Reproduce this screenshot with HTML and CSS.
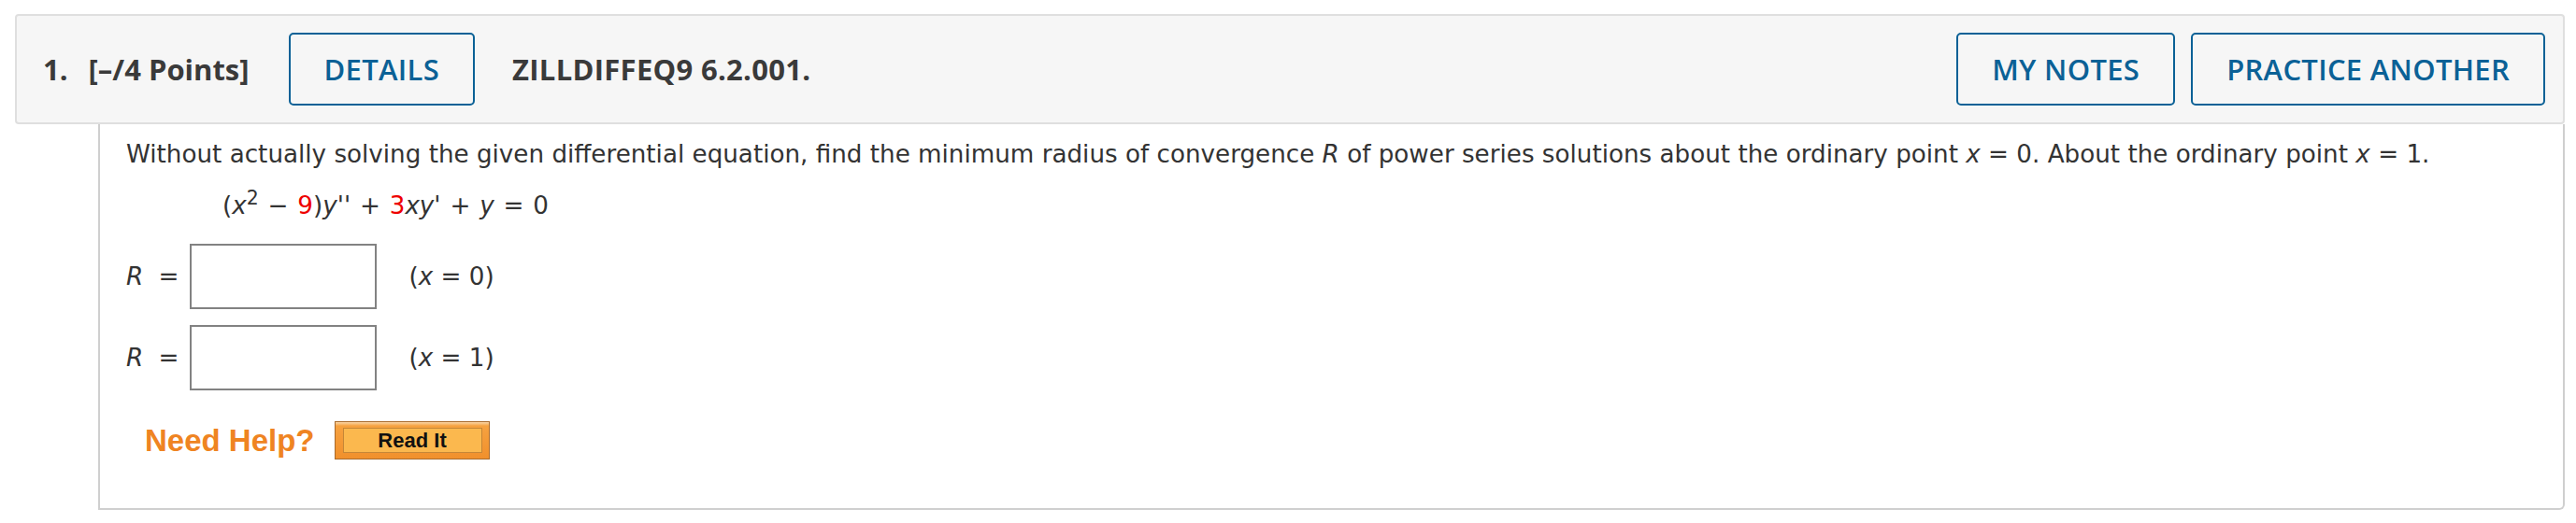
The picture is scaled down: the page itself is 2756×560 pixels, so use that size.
FILE: index.html
```html
<!DOCTYPE html>
<html lang="en">
<head>
<meta charset="utf-8">
<title>ZILLDIFFEQ9 6.2.001</title>
<link rel="stylesheet" href="styles.css">
</head>
<body>
<div class="question">
  <div class="qhead">
    <span class="qnum">1.</span>
    <span class="qpts">[–/4 Points]</span>
    <button class="btn">DETAILS</button>
    <span class="qid">ZILLDIFFEQ9 6.2.001.</span>
    <span class="spacer"></span>
    <button class="btn">MY NOTES</button>
    <button class="btn">PRACTICE ANOTHER</button>
  </div>
  <div class="qbody">
    <p class="prompt">Without actually solving the given differential equation, find the minimum radius of convergence <i>R</i> of power series solutions about the ordinary point <i>x</i> = 0. About the ordinary point <i>x</i> = 1.</p>
    <div class="eq">(<i>x</i><sup>2</sup> − <span class="red">9</span>)<i>y''</i> + <span class="red">3</span><i>xy'</i> + <i>y</i> = 0</div>
    <div class="ans">
      <span class="lbl"><i>R</i>&nbsp;=</span>
      <span class="box"></span>
      <span class="pt">(<i>x</i> = 0)</span>
    </div>
    <div class="ans">
      <span class="lbl"><i>R</i>&nbsp;=</span>
      <span class="box"></span>
      <span class="pt">(<i>x</i> = 1)</span>
    </div>
    <div class="help">
      <span class="needhelp">Need Help?</span>
      <span class="readit"><span class="readit-in">Read It</span></span>
    </div>
  </div>
</div>
</body>
</html>
```
FILE: styles.css
```css
html, body {
  margin: 0;
  padding: 0;
  background: #ffffff;
}

.question {
  padding: 15px 12px 0 16px;
}

.qhead {
  display: flex;
  align-items: center;
  background: #f6f6f6;
  border: 2px solid #dfdfdf;
  border-radius: 4px;
  padding: 18px 19px 18px 28px;
  font-family: "Open Sans", "Liberation Sans", sans-serif;
  color: #3a3a3a;
}

.qnum,
.qpts,
.qid {
  font-size: 31px;
  font-weight: 700;
}

.qnum { margin-right: 22px; }
.qpts { margin-right: 42px; }
.qid { margin-left: 40px; letter-spacing: 0.3px; }

.spacer { flex: 1; }

.btn {
  height: 78px;
  padding: 0 36px;
  background: transparent;
  border: 2px solid #0b6196;
  border-radius: 5px;
  color: #0b6196;
  font-family: "Open Sans", "Liberation Sans", sans-serif;
  font-size: 31px;
  font-weight: 600;
  line-height: 1;
  letter-spacing: 0.3px;
}

.btn + .btn { margin-left: 17px; }

.qbody {
  margin-left: 89px;
  border: 2px solid #cfcfcf;
  border-top: 0;
  border-radius: 0 0 6px 0;
  padding: 16px 0 52px 28px;
  font-family: "DejaVu Sans", Verdana, sans-serif;
  font-size: 26.2px;
  line-height: 32px;
  color: #333333;
}

.prompt { margin: 0; }

.eq {
  margin: 23px 0 0 103px;
  word-spacing: 1.5px;
}

.eq sup {
  font-size: 0.78em;
  line-height: 0;
  vertical-align: 0.5em;
}

.red { color: #ee0000; }

.ans {
  display: flex;
  align-items: center;
  margin-top: 25px;
}

.ans + .ans { margin-top: 17px; }

.lbl { margin-right: 12px; }
.lbl i { margin-right: 8px; }

.box {
  display: block;
  width: 196px;
  height: 66px;
  border: 2px solid #828282;
  background: #ffffff;
}

.pt { margin-left: 34px; }

.help {
  display: flex;
  align-items: center;
  margin: 33px 0 0 20px;
}

.needhelp {
  font-family: "Liberation Sans", Arial, sans-serif;
  font-size: 33px;
  font-weight: 700;
  color: #ef8422;
  margin-right: 21px;
}

.readit {
  display: block;
  padding: 6px 7px 6px 8px;
  border: 1px solid #a96a2b;
  background: linear-gradient(#fbd7a8 0, #f6a240 4px, #f1902c 100%);
}

.readit-in {
  display: block;
  width: 147px;
  height: 25px;
  border: 1px solid #c58637;
  background: #fbb84e;
  font-family: "Liberation Sans", Arial, sans-serif;
  font-size: 22px;
  font-weight: 700;
  line-height: 25px;
  text-align: center;
  color: #111111;
}
```
